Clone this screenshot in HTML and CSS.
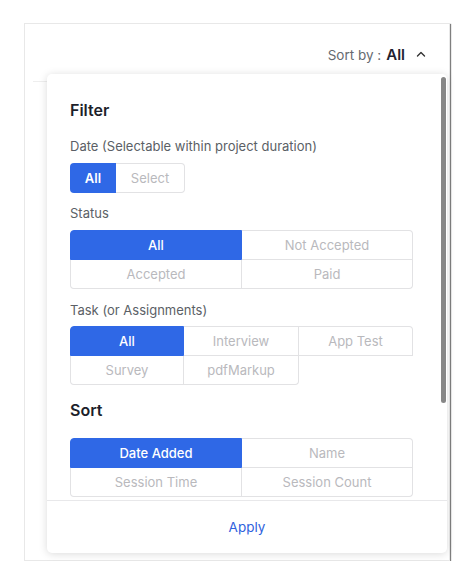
FILE: index.html
```html
<!DOCTYPE html>
<html>
<head>
<meta charset="utf-8">
<link rel="stylesheet" href="styles.css">
</head>
<body>
<div class="card">
  <div class="card-header">
    <span class="sort-label">Sort by :</span>
    <span class="sort-value">All</span>
    <svg class="caret" width="10" height="6" viewBox="0 0 10 6"><path d="M1.5 5 L5 1.5 L8.5 5" fill="none" stroke="#333" stroke-width="1.4" stroke-linecap="round" stroke-linejoin="round"/></svg>
  </div>
  <div class="panel">
    <div class="panel-body">
      <h2 class="heading">Filter</h2>
      <div class="label label-date">Date (Selectable within project duration)</div>
      <div class="btn-group">
        <div class="btn active">All</div>
        <div class="btn">Select</div>
      </div>
      <div class="label label-status">Status</div>
      <div class="grid cols-2">
        <div class="cell active r1 c1">All</div>
        <div class="cell r1">Not Accepted</div>
        <div class="cell c1">Accepted</div>
        <div class="cell">Paid</div>
      </div>
      <div class="label label-task">Task (or Assignments)</div>
      <div class="grid cols-3">
        <div class="cell active r1 c1">All</div>
        <div class="cell r1">Interview</div>
        <div class="cell r1">App Test</div>
        <div class="cell c1">Survey</div>
        <div class="cell">pdfMarkup</div>
      </div>
      <h2 class="heading heading-sort">Sort</h2>
      <div class="grid cols-2">
        <div class="cell active r1 c1">Date Added</div>
        <div class="cell r1">Name</div>
        <div class="cell c1">Session Time</div>
        <div class="cell">Session Count</div>
      </div>
    </div>
    <div class="panel-footer">Apply</div>
    <div class="scroll-thumb"></div>
  </div>
</div>
</body>
</html>
```
FILE: styles.css
```css
html, body {
  margin: 0;
  padding: 0;
  background: #fff;
}
body {
  font-family: "Inter", "Noto Sans", sans-serif;
  color: #222;
}
.card {
  position: relative;
  margin: 23px 0 0 24px;
  width: 424px;
  height: 536px;
  border: 1px solid #e8e8e8;
  box-shadow: 1px 1px 1px rgba(0,0,0,0.5);
  background: #fff;
}
.card-header {
  height: 58px;
  margin: 0 8px;
  border-bottom: 1px solid #eeeeee;
  display: flex;
  align-items: center;
  justify-content: flex-end;
  padding-right: 15px;
  padding-top: 4px;
  box-sizing: border-box;
}
.sort-label {
  font-size: 13.5px;
  color: #666a70;
  margin-right: 5px;
}
.sort-value {
  font-size: 15px;
  font-weight: 600;
  color: #1f2230;
  margin-right: 11px;
}
.caret {
  margin-top: -2px;
}
.panel {
  position: absolute;
  left: 22px;
  top: 50px;
  width: 400px;
  height: 479px;
  background: #fff;
  border-radius: 5px;
  box-shadow: 0 1px 8px rgba(0,0,0,0.15);
  display: flex;
  flex-direction: column;
  overflow: hidden;
}
.panel-body {
  height: 425px;
  overflow: hidden;
  padding: 26px 34px 0 23px;
  box-sizing: border-box;
}
.heading {
  margin: 0;
  font-size: 16px;
  line-height: 20px;
  font-weight: 600;
  color: #1d1f2b;
}
.heading-sort {
  margin-top: 15px;
}
.label {
  font-size: 13px;
  line-height: 18px;
  color: #5b5f66;
}
.label-date { margin-top: 17px; }
.label-status { margin-top: 11px; }
.label-task { margin-top: 12px; }
.btn-group {
  display: flex;
  margin-top: 8px;
  width: 115px;
  height: 30px;
}
.btn {
  display: flex;
  align-items: center;
  justify-content: center;
  font-size: 13px;
  color: #b9b9bd;
  box-sizing: border-box;
}
.btn.active {
  width: 46px;
  background: #2f68e6;
  color: #fff;
  font-weight: 600;
  border-radius: 4px 0 0 4px;
}
.btn:not(.active) {
  width: 69px;
  border: 1px solid #e2e2e4;
  border-left: none;
  border-radius: 0 4px 4px 0;
}
.grid {
  display: grid;
  width: 343px;
  margin-top: 8px;
  grid-auto-rows: 29.5px;
}
.label-task + .grid { margin-top: 7px; }
.heading-sort + .grid { margin-top: 18px; }
.cols-2 { grid-template-columns: 172px 171px; }
.cols-3 { grid-template-columns: 114px 115px 114px; }
.cell {
  display: flex;
  align-items: center;
  justify-content: center;
  font-size: 13px;
  color: #b9b9bd;
  border-right: 1px solid #e2e2e4;
  border-bottom: 1px solid #e2e2e4;
  box-sizing: border-box;
}
.cell.r1 { border-top: 1px solid #e2e2e4; }
.cell.c1 { border-left: 1px solid #e2e2e4; }
.cell.active {
  background: #2f68e6;
  border-color: #2f68e6;
  color: #fff;
  font-weight: 500;
  border-top-left-radius: 4px;
}
.cols-2 .cell:nth-child(2) { border-top-right-radius: 4px; }
.cols-2 .cell:nth-child(3) { border-bottom-left-radius: 4px; }
.cols-2 .cell:nth-child(4) { border-bottom-right-radius: 4px; }
.cols-3 .cell:nth-child(3) { border-top-right-radius: 4px; }
.cols-3 .cell:nth-child(4) { border-bottom-left-radius: 4px; }
.cols-3 .cell:nth-child(5) { border-bottom-right-radius: 4px; }
.panel-footer {
  flex: 1;
  border-top: 1px solid #e8e8ea;
  margin-top: 1px;
  display: flex;
  align-items: center;
  justify-content: center;
  font-size: 13.5px;
  color: #2f62dd;
  font-weight: 400;
}
.scroll-thumb {
  position: absolute;
  left: 394px;
  top: 3px;
  width: 5px;
  height: 326px;
  border-radius: 3px;
  background: #878787;
}
```
